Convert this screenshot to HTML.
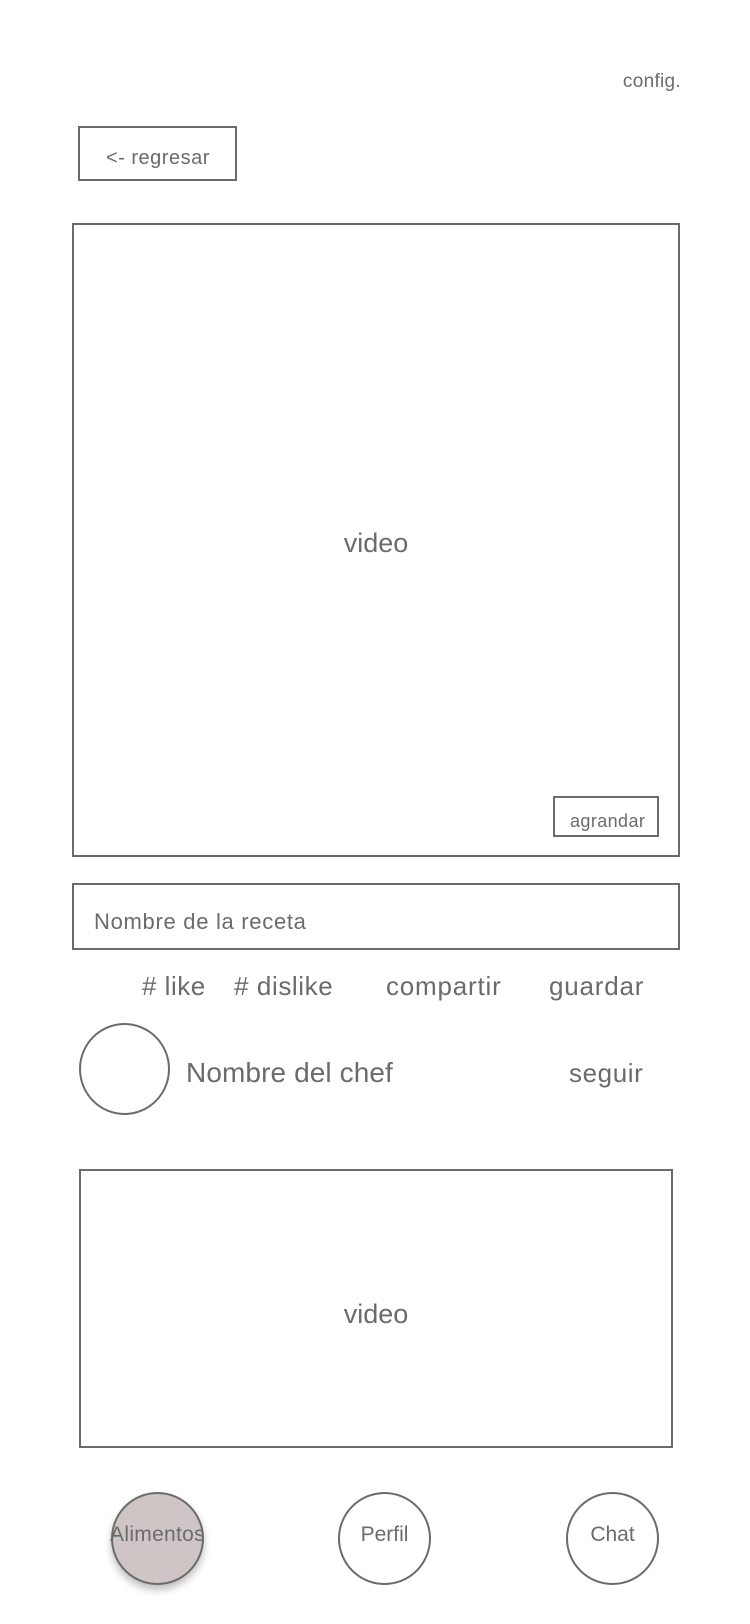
<!DOCTYPE html>
<html><head><meta charset="utf-8"><style>
body{margin:0;width:750px;height:1624px;background:#fff;position:relative;font-family:"Liberation Sans",sans-serif;color:#6b6b6b;overflow:hidden}
.a{position:absolute}
.b{position:absolute;border:2px solid #6b6b6b;box-sizing:border-box}
.c{position:absolute;border:2px solid #6b6b6b;border-radius:50%;box-sizing:border-box;display:flex;align-items:center;justify-content:center;font-size:21px;padding-bottom:8px}
</style></head><body>
<div class="a" style="right:69px;top:71px;font-size:19px;letter-spacing:0.3px">config.</div>
<div class="b" style="left:78px;top:126px;width:159px;height:55px;font-size:20px;padding:19px 0 0 26px;letter-spacing:0.5px">&lt;- regresar</div>
<div class="b" style="left:72px;top:223px;width:608px;height:634px"></div>
<div class="a" style="left:72px;width:608px;top:528px;text-align:center;font-size:27px">video</div>
<div class="b" style="left:553px;top:796px;width:106px;height:41px;font-size:18px;padding:13px 0 0 15px;letter-spacing:0.4px">agrandar</div>
<div class="b" style="left:72px;top:883px;width:608px;height:67px;font-size:22px;padding:24px 0 0 20px;letter-spacing:0.7px">Nombre de la receta</div>
<div class="a" style="left:142px;top:971px;font-size:26px;letter-spacing:0.5px">#&nbsp;like</div>
<div class="a" style="left:234px;top:971px;font-size:26px;letter-spacing:0.6px">#&nbsp;dislike</div>
<div class="a" style="left:386px;top:971px;font-size:26px;letter-spacing:0.8px">compartir</div>
<div class="a" style="left:549px;top:971px;font-size:26px;letter-spacing:0.8px">guardar</div>
<div class="b" style="left:79px;top:1023px;width:91px;height:92px;border-radius:50%"></div>
<div class="a" style="left:186px;top:1057px;font-size:28px;letter-spacing:0.1px">Nombre del chef</div>
<div class="a" style="left:569px;top:1058px;font-size:26px;letter-spacing:0.6px">seguir</div>
<div class="b" style="left:79px;top:1169px;width:594px;height:279px"></div>
<div class="a" style="left:79px;width:594px;top:1299px;text-align:center;font-size:27px">video</div>
<div class="c" style="left:111px;top:1492px;width:93px;height:93px;background:#cfc5c5;box-shadow:0 5px 8px rgba(0,0,0,.25)"><span style="white-space:nowrap;letter-spacing:0.3px">Alimentos</span></div>
<div class="c" style="left:338px;top:1492px;width:93px;height:93px">Perfil</div>
<div class="c" style="left:566px;top:1492px;width:93px;height:93px">Chat</div>
</body></html>
